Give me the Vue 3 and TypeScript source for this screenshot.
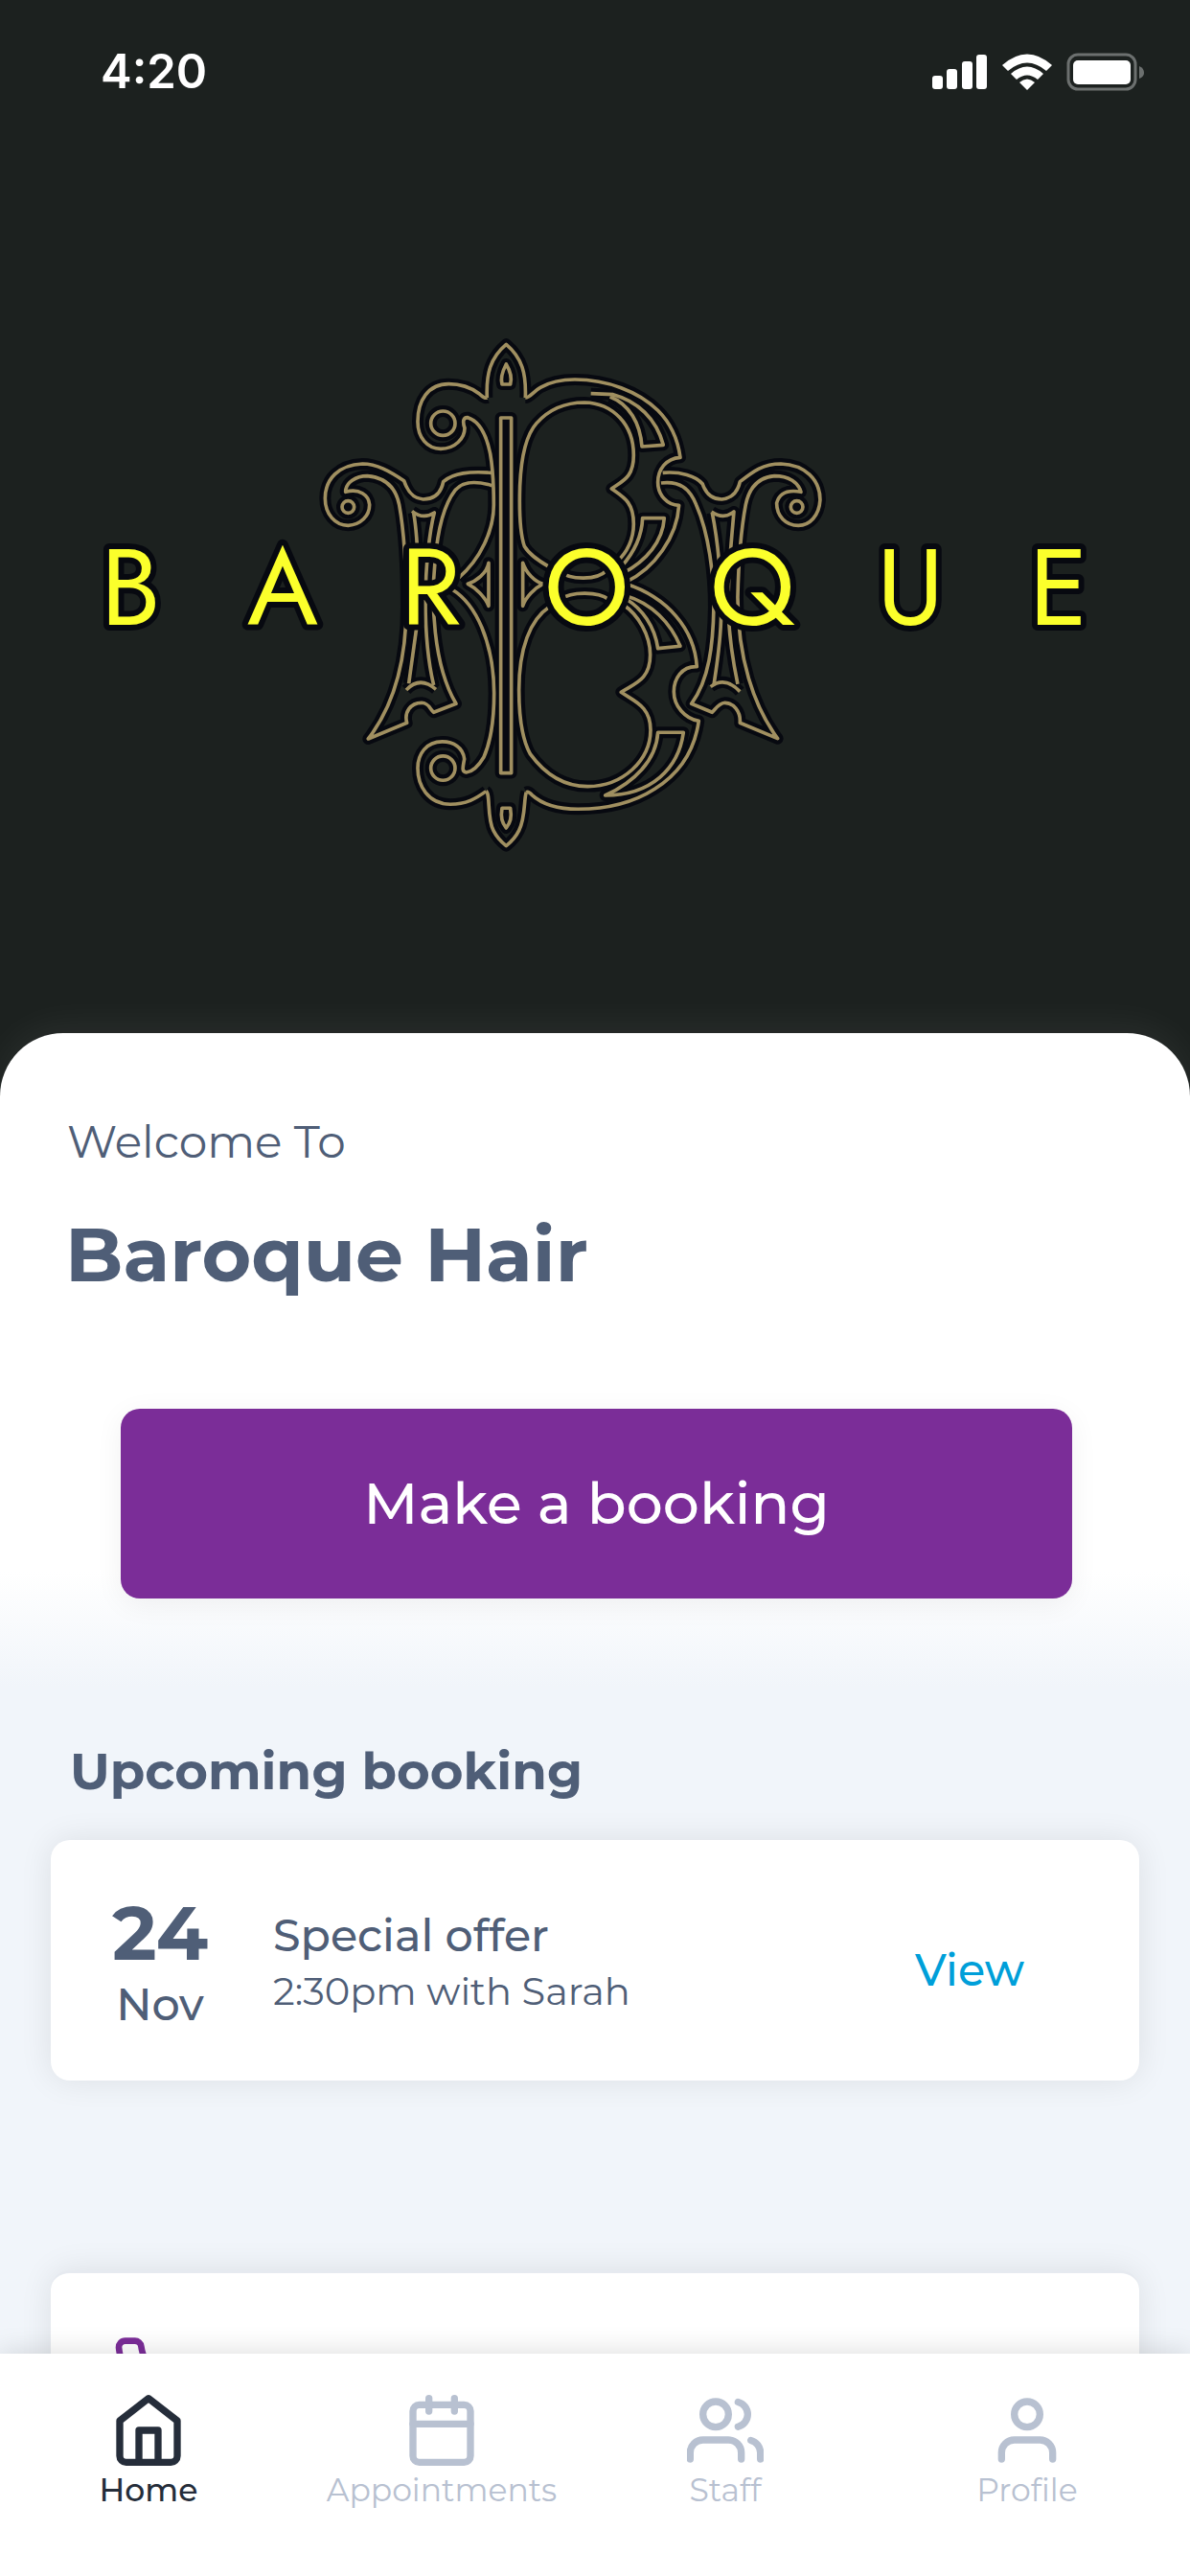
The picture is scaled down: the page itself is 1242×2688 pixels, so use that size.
<script setup lang="ts">
interface NavItem {
  label: string
  active: boolean
  shapes: string[]
}

interface Booking {
  day: string
  month: string
  title: string
  detail: string
}

const booking: Booking = {
  day: '24',
  month: 'Nov',
  title: 'Special offer',
  detail: '2:30pm with Sarah',
}

const navItems: NavItem[] = [
  {
    label: 'Home',
    active: true,
    shapes: ['M3 9l9-7 9 7v11a2 2 0 0 1-2 2H5a2 2 0 0 1-2-2z', 'M9 22V12h6v10'],
  },
  {
    label: 'Appointments',
    active: false,
    shapes: [
      'M5 4h14a2 2 0 0 1 2 2v14a2 2 0 0 1-2 2H5a2 2 0 0 1-2-2V6a2 2 0 0 1 2-2z',
      'M16 2v4',
      'M8 2v4',
      'M3 10h18',
    ],
  },
  {
    label: 'Staff',
    active: false,
    shapes: [
      'M17 21v-2a4 4 0 0 0-4-4H5a4 4 0 0 0-4 4v2',
      'M5 7a4 4 0 1 0 8 0a4 4 0 1 0-8 0',
      'M23 21v-2a4 4 0 0 0-3-3.87',
      'M16 3.13a4 4 0 0 1 0 7.75',
    ],
  },
  {
    label: 'Profile',
    active: false,
    shapes: ['M20 21v-2a4 4 0 0 0-4-4H8a4 4 0 0 0-4 4v2', 'M8 7a4 4 0 1 0 8 0a4 4 0 1 0-8 0'],
  },
]

// Monogram line work, drawn once as a dark halo and once in gold.
const monogram: string[] = [
  // finials and the drops inside them
  'M565 225C562 150 575 100 625 58C675 100 688 150 685 225',
  'M625 120C640 145 643 165 638 183H612C607 165 612 145 625 120Z',
  'M562 1457C576 1465 564 1540 585 1580C596 1602 610 1616 625 1628C640 1616 654 1602 665 1580C686 1540 680 1480 688 1460',
  'M612 1510H638C643 1540 638 1555 625 1572C612 1555 607 1540 612 1510Z',
  // left spine with its two scrolls
  'M565 225C556 229 548 218 540 212C510 190 480 182 445 182C380 182 348 235 348 300C348 350 378 385 420 385C465 385 495 352 495 320C488 300 490 286 505 287C545 300 565 350 575 400C582 440 586 500 586 560C586 640 545 730 475 790',
  'M455 825C530 870 586 990 587 1150C587 1240 577 1300 555 1350C540 1375 520 1396 500 1398C484 1396 490 1380 494 1356C490 1320 460 1302 425 1302C375 1302 348 1340 348 1385C348 1440 380 1497 450 1498C500 1498 530 1480 562 1457',
  'M389 305a38 38 0 1 0 76 0a38 38 0 1 0-76 0',
  'M389 1385a38 38 0 1 0 76 0a38 38 0 1 0-76 0',
  // central bar and the small side darts
  'M608 288H641V1400H608Z',
  'M570 742C565 775 530 800 505 808C530 820 560 850 570 877Z',
  'M677 742C688 775 715 800 740 808C715 820 685 850 677 877Z',
  // outer edge of both bowls
  'M685 225C700 225 710 205 732 193C765 174 800 168 840 168C940 168 1040 205 1100 265C1145 310 1163 360 1170 412C1125 415 1100 450 1100 490C1100 530 1130 562 1166 562C1160 660 1090 760 1000 802',
  'M1000 808C1130 850 1215 950 1222 1067C1175 1065 1150 1105 1150 1145C1150 1190 1185 1230 1228 1237C1215 1330 1170 1400 1090 1450C1020 1495 940 1513 850 1513C790 1513 740 1500 705 1468C698 1460 692 1458 688 1460',
  // counters of both bowls
  'M760 755C735 740 700 720 682 690C665 640 666 560 668 500C671 430 680 350 720 305C760 260 810 240 870 240C960 242 1024 310 1024 405C1024 475 990 485 955 510C990 535 1024 550 1024 620C1024 665 1005 710 970 740',
  'M760 880C700 920 665 1010 665 1140C665 1240 678 1300 700 1340C740 1395 800 1442 880 1442C990 1442 1077 1360 1077 1265C1077 1190 1025 1175 985 1147C1025 1120 1076 1110 1076 1030C1076 970 1040 905 990 872',
  'M795 770C825 796 910 798 940 765',
  'M795 856C830 830 915 832 945 856',
  // shading inside the bowls
  'M890 212L960 215C1035 235 1095 290 1117 373L1050 378C1045 305 1010 245 950 222',
  'M985 755C1025 710 1050 660 1052 602H1120C1115 675 1065 735 990 775',
  'M1000 855C1050 885 1090 940 1100 1010L1170 1003C1140 930 1080 868 1000 845',
  'M935 1470C1025 1430 1095 1360 1100 1273H1180C1165 1385 1080 1470 935 1470Z',
  // left stem
  'M580 460C510 455 460 460 428 488C420 530 395 543 365 543C330 540 315 515 305 485C260 455 220 432 175 432C100 435 58 480 58 540C58 590 90 625 130 625C170 622 197 595 197 560C195 530 165 508 122 520C122 490 155 470 190 470C250 475 280 510 290 560C308 660 312 780 312 880C312 1030 280 1180 193 1293L314 1243C305 1210 325 1180 360 1180C385 1182 385 1200 398 1210L468 1183C395 1060 390 860 402 740C410 640 430 560 465 515C490 485 530 485 580 500',
  'M345 940L320 1120',
  'M335 585C352 680 352 860 345 940',
  'M330 580Q365 608 400 585C385 640 372 760 372 860C372 960 380 1050 398 1125',
  'M312 1140Q355 1095 405 1138',
  'M111 567a19 19 0 1 0 38 0a19 19 0 1 0-38 0',
  // right stem
  'M1115 460C1170 455 1220 470 1240 495C1250 525 1270 543 1300 543C1330 540 1350 520 1357 488C1400 455 1430 432 1485 432C1560 435 1608 480 1608 545C1605 595 1575 625 1540 625C1500 625 1472 595 1472 555C1480 525 1505 512 1548 520C1540 490 1510 470 1465 470C1410 475 1385 510 1375 560C1360 640 1352 760 1350 850C1350 1040 1400 1190 1475 1292L1357 1243C1360 1205 1335 1180 1310 1180C1290 1182 1280 1200 1270 1210L1205 1183C1260 1110 1273 1000 1275 880C1275 780 1260 650 1220 560C1200 510 1170 485 1110 492',
  'M1268 582Q1305 608 1338 582C1330 680 1320 760 1320 880C1322 960 1335 1050 1350 1122',
  'M1270 585C1285 660 1298 760 1298 900C1298 980 1285 1060 1275 1125',
  'M1265 1130Q1310 1095 1357 1145',
  'M1516 567a19 19 0 1 0 38 0a19 19 0 1 0-38 0',
]
</script>

<template>
  <div class="app">
    <main class="scroll">
      <header class="hero">
        <div class="status">
          <span class="clock">4:20</span>
          <svg class="indicators" viewBox="0 0 222 40" aria-hidden="true">
            <g fill="#fff">
              <rect x="0" y="24" width="11" height="14" rx="3" />
              <rect x="15" y="17" width="11" height="21" rx="3" />
              <rect x="31" y="9" width="11" height="29" rx="3" />
              <rect x="46" y="2" width="11" height="36" rx="3" />
              <path d="M73 13Q99-10 125 13L119 19Q99 2 79 19Z" />
              <path d="M82 22Q99 7 116 22L110 28Q99 19 88 28Z" />
              <path d="M91 31Q99 24 107 31L99 39Z" />
              <rect x="147" y="8" width="60" height="25" rx="5" />
            </g>
            <rect x="142" y="2" width="70" height="36" rx="10" fill="none" stroke="#6c706f" stroke-width="3" />
            <path d="M216 14Q221 16 221 21Q221 25 216 27Z" fill="#6c706f" />
          </svg>
        </div>
        <svg class="logo" viewBox="0 150 1242 994" role="img" aria-label="Baroque">
          <g transform="translate(320 340) scale(0.3333)" fill="none" stroke-linejoin="round">
            <path v-for="(d, i) in monogram" :key="'h' + i" :d="d" stroke="#070910" stroke-width="36" />
            <path v-for="(d, i) in monogram" :key="'g' + i" :d="d" stroke="#a08f60" stroke-width="11" />
          </g>
          <text class="wordmark" x="105 258 418 568 741 915 1074" y="652">BAROQUE</text>
        </svg>
      </header>

      <section class="sheet">
        <p class="welcome">Welcome To</p>
        <h1 class="name">Baroque Hair</h1>
        <button class="book" type="button">Make a booking</button>
      </section>

      <section class="upcoming">
        <h2 class="heading">Upcoming booking</h2>
        <article class="card">
          <div class="date">
            <span class="day">{{ booking.day }}</span>
            <span class="month">{{ booking.month }}</span>
          </div>
          <div class="info">
            <span class="title">{{ booking.title }}</span>
            <span class="detail">{{ booking.detail }}</span>
          </div>
          <a class="view" href="#booking">View</a>
        </article>
        <article class="card contact">
          <svg class="phone" viewBox="0 0 24 24" aria-hidden="true">
            <path
              d="M22 16.92v3a2 2 0 0 1-2.18 2 19.79 19.79 0 0 1-8.63-3.07 19.5 19.5 0 0 1-6-6 19.79 19.79 0 0 1-3.07-8.67A2 2 0 0 1 4.11 2h3a2 2 0 0 1 2 1.72 12.84 12.84 0 0 0 .7 2.81 2 2 0 0 1-.45 2.11L8.09 9.91a16 16 0 0 0 6 6l1.27-1.27a2 2 0 0 1 2.11-.45 12.84 12.84 0 0 0 2.81.7A2 2 0 0 1 22 16.92z"
            />
          </svg>
        </article>
      </section>
    </main>

    <nav class="tabs">
      <a
        v-for="item in navItems"
        :key="item.label"
        class="tab"
        :class="{ active: item.active }"
        :href="'#' + item.label.toLowerCase()"
      >
        <svg class="icon" viewBox="0 0 24 24" aria-hidden="true">
          <path v-for="shape in item.shapes" :key="shape" :d="shape" />
        </svg>
        <span>{{ item.label }}</span>
      </a>
    </nav>
  </div>
</template>

<style>
body {
  margin: 0;
  background: #f1f5fa;
}
</style>

<style scoped>
.app {
  display: flex;
  flex-direction: column;
  height: 100vh;
  font-family: Montserrat, Inter, sans-serif;
  color: #4f5e77;
}

.scroll {
  flex: 1;
  min-height: 0;
  overflow: hidden;
}

.hero {
  background: #1c211f;
}

.status {
  display: flex;
  align-items: center;
  justify-content: space-between;
  height: 150px;
  box-sizing: border-box;
  padding: 0 47px 0 105px;
}

.clock {
  color: #fff;
  font-family: Inter, sans-serif;
  font-size: 49px;
  font-weight: 600;
  line-height: 60px;
}

.indicators {
  width: 222px;
  height: 40px;
}

.logo {
  display: block;
  width: 100%;
}

.wordmark {
  font-family: Jost, Lato, sans-serif;
  font-size: 112px;
  font-weight: 400;
  fill: #fbff2b;
  stroke: #070910;
  stroke-width: 12px;
  stroke-linejoin: round;
  paint-order: stroke;
}

.sheet {
  position: relative;
  display: flex;
  flex-direction: column;
  margin-top: -66px;
  padding: 84px 68px 92px;
  border-radius: 66px 66px 0 0;
  background: linear-gradient(to bottom, #fff calc(100% - 120px), #f1f5fa);
  box-shadow: 0 -8px 40px rgba(255, 255, 255, 0.06);
}

.welcome {
  margin: 0;
  padding-left: 2px;
  font-size: 47px;
  font-weight: 400;
  line-height: 60px;
}

.name {
  margin: 37px 0 0;
  font-size: 79px;
  font-weight: 700;
  line-height: 100px;
}

.book {
  margin: 111px 55px 0 58px;
  height: 198px;
  border: 0;
  border-radius: 20px;
  background: #7b2d98;
  box-shadow: 0 6px 30px rgba(0, 0, 0, 0.06);
  color: #fff;
  font: 500 60px/80px Montserrat, Inter, sans-serif;
}

.upcoming {
  padding: 53px 53px 0;
}

.heading {
  margin: 0 0 37px;
  padding-left: 20px;
  font-size: 53px;
  font-weight: 700;
  line-height: 70px;
}

.card {
  display: flex;
  align-items: center;
  height: 251px;
  box-sizing: border-box;
  padding: 2px 120px 0 54px;
  border-radius: 20px;
  background: #fff;
  box-shadow: 0 0 34px rgba(0, 0, 0, 0.09);
}

.date {
  display: flex;
  flex-direction: column;
  align-items: center;
  width: 120px;
  margin-right: 58px;
}

.day {
  font-size: 79px;
  font-weight: 700;
  line-height: 90px;
}

.month,
.title,
.view {
  font-size: 46px;
  font-weight: 500;
  line-height: 60px;
}

.info {
  display: flex;
  flex: 1;
  flex-direction: column;
  gap: 2px;
}

.detail {
  font-size: 40px;
  line-height: 52px;
}

.view {
  padding-top: 18px;
  color: #009fd9;
  text-decoration: none;
}

.contact {
  align-items: flex-start;
  margin-top: 198px;
  padding: 64px 64px 0;
  border-top: 3px solid #e6eaf0;
}

.phone {
  width: 80px;
  height: 80px;
  fill: none;
  stroke: #7b2d98;
  stroke-width: 2;
}

.tabs {
  position: relative;
  display: grid;
  grid-template-columns: 310fr 302fr 290fr 340fr;
  padding: 40px 0 68px;
  background: #fff;
  box-shadow: 0 0 28px rgba(0, 0, 0, 0.15);
}

.tab {
  display: flex;
  flex-direction: column;
  align-items: center;
  color: #b8c1d1;
  font-size: 33px;
  line-height: 44px;
  text-decoration: none;
}

.active {
  color: #252d3a;
  font-weight: 500;
}

.icon {
  width: 80px;
  height: 80px;
  fill: none;
  stroke: currentColor;
  stroke-width: 2.2;
  stroke-linecap: round;
  stroke-linejoin: round;
}
</style>
